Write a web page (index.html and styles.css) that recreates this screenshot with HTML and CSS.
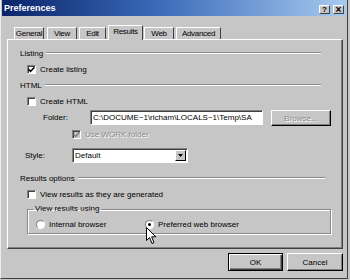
FILE: index.html
```html
<!DOCTYPE html>
<html lang="en">
<head>
    <meta charset="UTF-8">
    <title>Preferences</title>
    <link rel="stylesheet" href="styles.css">
</head>
<body>
    <div class="window">
        <div class="titlebar">
            <span class="title">Preferences</span>
            <div class="caption">
                <span class="cap-btn">?</span>
                <span class="cap-btn close">&#215;</span>
            </div>
        </div>

        <div class="tabs">
            <span class="tab general">General</span>
            <span class="tab view">View</span>
            <span class="tab edit">Edit</span>
            <span class="tab results selected">Results</span>
            <span class="tab web">Web</span>
            <span class="tab advanced">Advanced</span>
        </div>

        <div class="panel">
            <div class="section"><span>Listing</span><span class="rule"></span></div>
            <div class="check-row">
                <span class="box"><svg width="7" height="7" viewBox="0 0 7 7"><path d="M0.5 3.2 L2.6 5.3 L6.5 1.2" fill="none" stroke="#000" stroke-width="1.6"/></svg></span>
                <span>Create listing</span>
            </div>

            <div class="section"><span>HTML</span><span class="rule"></span></div>
            <div class="check-row">
                <span class="box"></span>
                <span>Create HTML</span>
            </div>
            <div class="folder-row">
                <span class="label folder-label">Folder:</span>
                <span class="textbox">C:\DOCUME~1\richam\LOCALS~1\Temp\SA</span>
                <span class="btn disabled browse">Browse...</span>
            </div>
            <div class="check-row work">
                <span class="box off"><svg width="7" height="7" viewBox="0 0 7 7"><path d="M0.5 3.2 L2.6 5.3 L6.5 1.2" fill="none" stroke="#808080" stroke-width="1.6"/></svg></span>
                <span class="dim">Use WORK folder</span>
            </div>
            <div class="style-row">
                <span class="label">Style:</span>
                <span class="select">
                    <span class="select-text">Default</span>
                    <span class="drop"><svg width="5" height="3" viewBox="0 0 5 3"><path d="M0 0 H5 L2.5 3 Z" fill="#000"/></svg></span>
                </span>
            </div>

            <div class="section results-head"><span>Results options</span><span class="rule"></span></div>
            <div class="check-row">
                <span class="box"></span>
                <span>View results as they are generated</span>
            </div>
            <fieldset class="group">
                <legend>View results using</legend>
                <div class="radio-row">
                    <span class="option first"><span class="radio"></span>Internal browser</span>
                    <span class="option"><span class="radio on"></span>Preferred web browser</span>
                </div>
            </fieldset>
        </div>

        <div class="buttons">
            <span class="btn default">OK</span>
            <span class="btn">Cancel</span>
        </div>

        <svg class="cursor" width="12" height="18" viewBox="0 0 12 18">
            <path d="M0.5 0.5 L0.5 13.5 L3.5 10.5 L6 16.5 L8 15.6 L5.6 9.8 L9.8 9.8 Z" fill="#fff" stroke="#000" stroke-width="1"/>
        </svg>
    </div>
</body>
</html>
```

FILE: styles.css
```css
body {
    margin: 0;
    background: #c6c6c6;
    font-family: "Liberation Sans", Arial, sans-serif;
    font-size: 8px;
    color: #000;
}
.window {
    position: relative;
    width: 348px;
    height: 279px;
    box-sizing: border-box;
    border-left: 1px solid #ececec;
    border-right: 1px solid #404040;
    border-bottom: 1px solid #404040;
    background: #c6c6c6;
}
.titlebar {
    height: 16px;
    margin: 0 1px;
    padding: 0 2px 0 2px;
    display: flex;
    align-items: center;
    justify-content: space-between;
    background: linear-gradient(to right, #0a246a, #3a6ab8 45%, #a6caf0);
}
.title {
    color: #fff;
    font-weight: bold;
    font-size: 9px;
}
.caption {
    display: flex;
    gap: 3px;
    margin-top: 3px;
}
.cap-btn {
    width: 11px;
    height: 9px;
    box-sizing: border-box;
    background: #c6c6c6;
    border-top: 1px solid #fff;
    border-left: 1px solid #fff;
    border-right: 1px solid #404040;
    border-bottom: 1px solid #404040;
    font-size: 8px;
    font-weight: bold;
    line-height: 7px;
    text-align: center;
}
.close {
    font-size: 10px;
}
.tabs {
    height: 23px;
    padding-left: 13px;
    display: flex;
    align-items: flex-end;
}
.tab {
    height: 12px;
    box-sizing: border-box;
    margin-right: 2px;
    border-top: 1px solid #fff;
    border-left: 1px solid #fff;
    border-right: 1px solid #404040;
    line-height: 11px;
    letter-spacing: -0.3px;
    text-align: center;
}
.general { width: 30px; margin-right: 3px; }
.view { width: 30px; }
.edit { width: 27px; }
.results { width: 35px; margin-right: 1px; }
.web { width: 30px; }
.advanced { width: 45px; }
.tab.selected {
    position: relative;
    z-index: 1;
    height: 15px;
    margin-bottom: -1px;
    line-height: 12px;
    background: #c6c6c6;
}
.panel {
    height: 210px;
    width: 336px;
    margin-left: 6px;
    box-sizing: border-box;
    padding: 7px 0 0 12px;
    border-top: 1px solid #fff;
    border-left: 1px solid #fff;
    border-right: 1px solid #404040;
    border-bottom: 1px solid #404040;
    box-shadow: inset -1px -1px 0 #808080;
}
.section {
    height: 12px;
    display: flex;
    align-items: center;
}
.rule {
    flex: 1;
    margin: 0 21px 0 3px;
    height: 0;
    border-top: 1px solid #8a8a8a;
    border-bottom: 1px solid #fff;
}
.check-row {
    height: 12px;
    margin-top: 4px;
    padding-left: 7px;
    display: flex;
    align-items: center;
}
.section + .check-row, .check-row + .section {
    margin-top: 4px;
}
.box {
    width: 9px;
    height: 9px;
    box-sizing: border-box;
    margin-right: 4px;
    background: #fff;
    border-top: 1px solid #808080;
    border-left: 1px solid #808080;
    border-right: 1px solid #fff;
    border-bottom: 1px solid #fff;
    box-shadow: inset 1px 1px 0 #404040;
    display: flex;
    align-items: center;
    justify-content: center;
}
.box.off {
    background: #c6c6c6;
}
.dim {
    color: #8a8a8a;
    text-shadow: 1px 1px 0 #fff;
}
.folder-row {
    margin-top: 3px;
    height: 17px;
    display: flex;
    align-items: flex-start;
}
.label {
    width: 47px;
    line-height: 15px;
}
.folder-label {
    padding-left: 23px;
}
.textbox, .select {
    height: 15px;
    box-sizing: border-box;
    background: #fff;
    border-top: 1px solid #808080;
    border-left: 1px solid #808080;
    border-right: 1px solid #fff;
    border-bottom: 1px solid #fff;
    box-shadow: inset 1px 1px 0 #404040;
}
.textbox {
    width: 173px;
    padding-left: 2px;
    line-height: 13px;
    overflow: hidden;
    white-space: nowrap;
}
.btn {
    display: inline-flex;
    align-items: center;
    justify-content: center;
    height: 18px;
    box-sizing: border-box;
    background: #c6c6c6;
    border-top: 1px solid #fff;
    border-left: 1px solid #fff;
    border-right: 1px solid #000;
    border-bottom: 1px solid #000;
    box-shadow: inset -1px -1px 0 #808080;
}
.browse {
    width: 60px;
    height: 16px;
    margin-left: 8px;
}
.disabled {
    color: #8a8a8a;
    text-shadow: 1px 1px 0 #fff;
}
.work {
    margin-top: 1px;
    padding-left: 52px;
}
.style-row {
    margin-top: 8px;
    height: 15px;
    padding-left: 5px;
    display: flex;
}
.select {
    width: 116px;
    display: flex;
    justify-content: space-between;
}
.select-text {
    padding-left: 2px;
    line-height: 13px;
}
.drop {
    width: 11px;
    height: 11px;
    margin: 1px;
    box-sizing: border-box;
    background: #c6c6c6;
    border-top: 1px solid #fff;
    border-left: 1px solid #fff;
    border-right: 1px solid #000;
    border-bottom: 1px solid #000;
    display: flex;
    align-items: center;
    justify-content: center;
}
.section.results-head {
    margin-top: 9px;
}
.section.results-head .rule {
    margin-right: 17px;
}
.group {
    width: 304px;
    margin: 4px 0 0 7px;
    padding: 4px 8px 3px 8px;
    box-sizing: border-box;
    border: 1px solid #8a8a8a;
    box-shadow: inset 1px 1px 0 #fff, 1px 1px 0 #fff;
}
.group legend {
    margin-left: -3px;
    padding: 0 2px;
    line-height: 10px;
}
.radio-row {
    height: 12px;
    display: flex;
    align-items: center;
}
.option {
    display: flex;
    align-items: center;
}
.option.first {
    width: 109px;
}
.radio {
    width: 9px;
    height: 9px;
    box-sizing: border-box;
    margin-right: 4px;
    border-radius: 50%;
    background: #fff;
    border: 1px solid;
    border-color: #808080 #fff #fff #808080;
    display: flex;
    align-items: center;
    justify-content: center;
}
.radio.on::after {
    content: "";
    width: 3px;
    height: 3px;
    border-radius: 50%;
    background: #000;
}
.buttons {
    margin-top: 4px;
    padding-right: 4px;
    display: flex;
    justify-content: flex-end;
    gap: 4px;
}
.buttons .btn {
    width: 56px;
}
.btn.default {
    width: 55px;
    border: 1px solid #000;
    box-shadow: inset 1px 1px 0 #fff, inset -1px -1px 0 #404040, inset -2px -2px 0 #808080;
}
.cursor {
    position: absolute;
    left: 145px;
    top: 227px;
}
```
